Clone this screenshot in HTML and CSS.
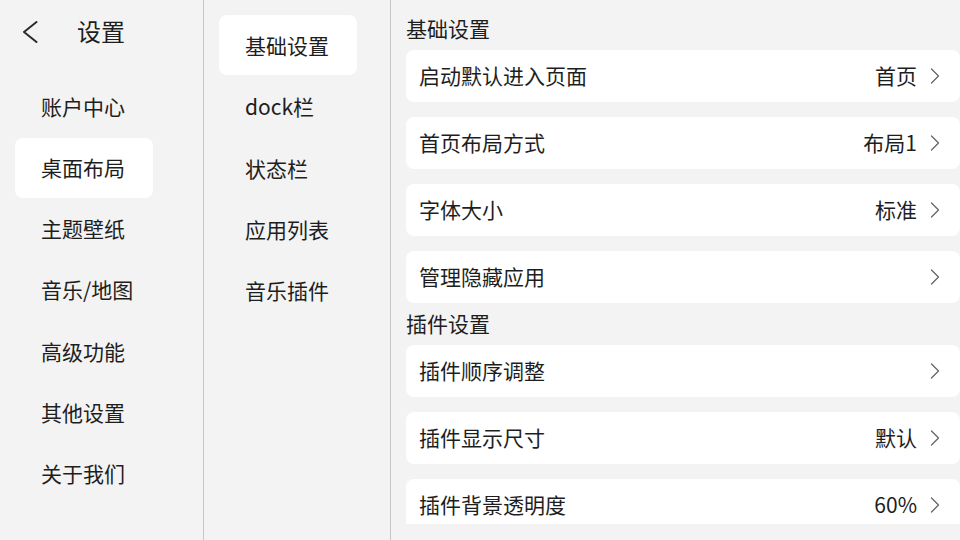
FILE: index.html
```html
<!DOCTYPE html>
<html lang="zh-CN">
<head>
<meta charset="utf-8">
<title>设置</title>
<link rel="stylesheet" href="styles.css">
</head>
<body>
<div class="app">
  <aside class="col col-main">
    <div class="header">
      <svg class="back" width="16" height="22" viewBox="0 0 16 22"><path d="M14.5 1 L2 11 L14.5 21" fill="none" stroke="#2a2a2a" stroke-width="2" stroke-linecap="round" stroke-linejoin="round"/></svg>
      <span class="header-title">设置</span>
    </div>
    <ul class="nav nav-main">
      <li class="nav-item">账户中心</li>
      <li class="nav-item active">桌面布局</li>
      <li class="nav-item">主题壁纸</li>
      <li class="nav-item">音乐/地图</li>
      <li class="nav-item">高级功能</li>
      <li class="nav-item">其他设置</li>
      <li class="nav-item">关于我们</li>
    </ul>
  </aside>
  <aside class="col col-sub">
    <ul class="nav nav-sub">
      <li class="nav-item active">基础设置</li>
      <li class="nav-item">dock栏</li>
      <li class="nav-item">状态栏</li>
      <li class="nav-item">应用列表</li>
      <li class="nav-item">音乐插件</li>
    </ul>
  </aside>
  <main class="content">
    <div class="scroll">
      <section class="section">
        <h2 class="section-title">基础设置</h2>
        <div class="cards">
          <div class="card"><span class="label">启动默认进入页面</span><span class="value">首页</span><svg class="chev" width="10" height="16" viewBox="0 0 10 16"><path d="M1.5 1 L8.5 8 L1.5 15" fill="none" stroke="#666" stroke-width="1.3" stroke-linecap="round" stroke-linejoin="round"/></svg></div>
          <div class="card"><span class="label">首页布局方式</span><span class="value">布局1</span><svg class="chev" width="10" height="16" viewBox="0 0 10 16"><path d="M1.5 1 L8.5 8 L1.5 15" fill="none" stroke="#666" stroke-width="1.3" stroke-linecap="round" stroke-linejoin="round"/></svg></div>
          <div class="card"><span class="label">字体大小</span><span class="value">标准</span><svg class="chev" width="10" height="16" viewBox="0 0 10 16"><path d="M1.5 1 L8.5 8 L1.5 15" fill="none" stroke="#666" stroke-width="1.3" stroke-linecap="round" stroke-linejoin="round"/></svg></div>
          <div class="card"><span class="label">管理隐藏应用</span><span class="value"></span><svg class="chev" width="10" height="16" viewBox="0 0 10 16"><path d="M1.5 1 L8.5 8 L1.5 15" fill="none" stroke="#666" stroke-width="1.3" stroke-linecap="round" stroke-linejoin="round"/></svg></div>
        </div>
      </section>
      <section class="section">
        <h2 class="section-title second">插件设置</h2>
        <div class="cards">
          <div class="card"><span class="label">插件顺序调整</span><span class="value"></span><svg class="chev" width="10" height="16" viewBox="0 0 10 16"><path d="M1.5 1 L8.5 8 L1.5 15" fill="none" stroke="#666" stroke-width="1.3" stroke-linecap="round" stroke-linejoin="round"/></svg></div>
          <div class="card"><span class="label">插件显示尺寸</span><span class="value">默认</span><svg class="chev" width="10" height="16" viewBox="0 0 10 16"><path d="M1.5 1 L8.5 8 L1.5 15" fill="none" stroke="#666" stroke-width="1.3" stroke-linecap="round" stroke-linejoin="round"/></svg></div>
          <div class="card"><span class="label">插件背景透明度</span><span class="value">60%</span><svg class="chev" width="10" height="16" viewBox="0 0 10 16"><path d="M1.5 1 L8.5 8 L1.5 15" fill="none" stroke="#666" stroke-width="1.3" stroke-linecap="round" stroke-linejoin="round"/></svg></div>
        </div>
      </section>
    </div>
  </main>
</div>
</body>
</html>
```

FILE: styles.css
```css
* { box-sizing: border-box; }
html, body {
  margin: 0;
  padding: 0;
  width: 960px;
  height: 540px;
  overflow: hidden;
  background: #f3f3f3;
  font-family: "Noto Sans CJK SC", "Noto Sans", sans-serif;
  color: #1e1e1e;
}
.app {
  display: flex;
  width: 960px;
  height: 540px;
}
.col {
  height: 540px;
  border-right: 1px solid #c6c6c6;
}
.col-main { width: 204px; }
.col-sub { width: 187px; }
.header {
  display: flex;
  align-items: center;
  height: 64px;
  padding-left: 22px;
}
.back { display: block; margin-right: 39px; }
.header-title {
  font-size: 24px;
  line-height: 30px;
  padding-bottom: 3px;
}
.nav {
  list-style: none;
  margin: 0;
  padding: 0 0 0 15px;
  display: flex;
  flex-direction: column;
  gap: 1.3px;
}
.nav-main { margin-top: 13px; }
.nav-sub { margin-top: 15px; }
.nav-item {
  width: 138px;
  height: 60px;
  display: flex;
  align-items: center;
  padding-left: 26px;
  font-size: 21px;
  border-radius: 8px;
}
.nav-main .nav-item { padding-bottom: 3px; }
.nav-item.active { background: #ffffff; }
.content {
  flex: 1;
  height: 540px;
  padding-left: 15px;
}
.scroll {
  height: 524px;
  overflow: hidden;
  padding-top: 15px;
}
.section-title {
  margin: 0 0 5px 0;
  height: 30px;
  line-height: 27px;
  font-size: 21px;
  font-weight: 400;
}
.section-title.second { margin-top: 7px; }
.cards {
  display: flex;
  flex-direction: column;
  gap: 15px;
}
.card {
  height: 52px;
  background: #ffffff;
  border-radius: 8px;
  display: flex;
  align-items: center;
  padding: 0 20px 2px 13px;
  font-size: 21px;
}
.label { flex: 1; }
.value { margin-right: 13px; }
.chev { display: block; flex: none; margin-top: 2px; }
```
